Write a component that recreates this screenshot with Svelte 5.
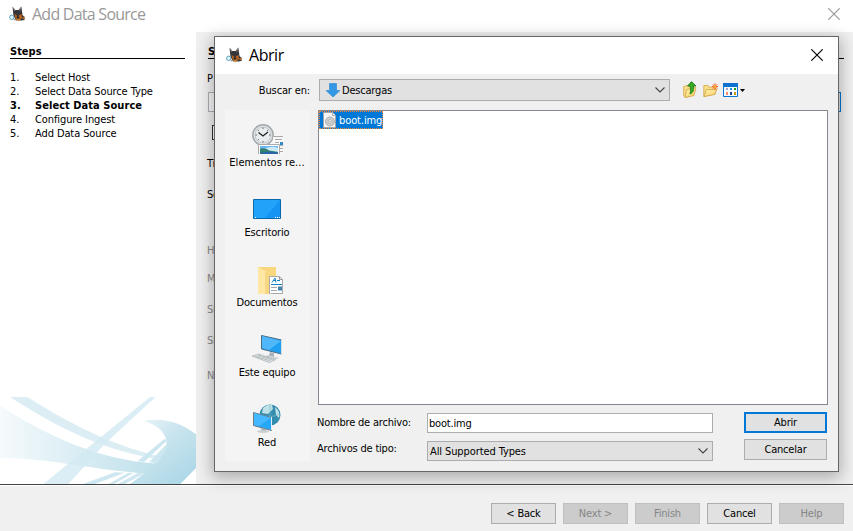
<script>
  const steps = ['Select Host', 'Select Data Source Type', 'Select Data Source', 'Configure Ingest', 'Add Data Source'];
  const places = [
    { id: 'recent', label: 'Elementos re...' },
    { id: 'desktop', label: 'Escritorio' },
    { id: 'docs', label: 'Documentos' },
    { id: 'computer', label: 'Este equipo' },
    { id: 'network', label: 'Red' }
  ];
  const fields = [
    { text: 'Ti', gap: 0 },
    { text: 'Se', gap: 17 },
    { text: 'H', gap: 42, off: true },
    { text: 'M', gap: 14, off: true },
    { text: 'SI', gap: 17, off: true },
    { text: 'SI', gap: 17, off: true },
    { text: 'N', gap: 21, off: true }
  ];
  const actions = [
    { label: '< Back' },
    { label: 'Next >', off: true },
    { label: 'Finish', off: true },
    { label: 'Cancel' },
    { label: 'Help', off: true }
  ];
</script>

{#snippet dog()}
  <svg class="dog" width="16" height="16" viewBox="0 0 16 16">
    <path d="M3.500 0.500L6 4h3.500L12.300 0.500l.7 5L13.500 9l2 2v3l-3 .5H7L4.500 10z" fill="#34363c" />
    <path d="M4.500 2l1.200 3M11.700 2l-1.200 3" stroke="#85797d" />
    <path d="M5.500 8l2 1 1 2 2-2 2-1 .5 4-3.500 2.500-3-2zM12.500 12l3-1.500v3z" fill="#b8641f" />
    <path d="M7.500 10.500h3l-.5 2H8z" fill="#25222a" />
    <path d="M7 14h4.500" stroke="#e39a43" />
    <circle cx="2.800" cy="11.300" r="2.200" fill="#d9f7ff" stroke="#639fb6" />
    <path d="M4.500 13l1.500 1.300" stroke="#777" />
  </svg>
{/snippet}

{#snippet cross()}
  <svg class="cross" width="12" height="12" viewBox="0 0 12 12"><path d="M.3.3l11.4 11.4M11.7.3L.3 11.7" stroke="currentColor" stroke-width="1.15" /></svg>
{/snippet}

{#snippet chevron()}
  <svg class="chevron" width="10" height="6" viewBox="0 0 10 6"><path d="M.5.5L5 5 9.5.5" fill="none" stroke="#444" stroke-width="1.1" /></svg>
{/snippet}

<div class="wizard">
  <header class="title">
    {@render dog()}<span>Add Data Source</span>{@render cross()}
  </header>
  <main>
    <aside>
      <h2>Steps</h2>
      <ol>
        {#each steps as step, i}
          <li class:current={i === 2}><span>{i + 1}.</span><span class="step">{step}</span></li>
        {/each}
      </ol>
      <svg class="swoosh" width="196" height="87" viewBox="0 36 588 261" preserveAspectRatio="none">
        <defs>
          <linearGradient id="wide"><stop offset="0" stop-color="#f5fafc" /><stop offset=".45" stop-color="#dceef4" /><stop offset="1" stop-color="#bfe0eb" /></linearGradient>
          <linearGradient id="ring" x1="0" y1="0" x2=".8" y2="1"><stop offset="0" stop-color="#eef7fa" /><stop offset=".45" stop-color="#c9e4ee" /><stop offset="1" stop-color="#acd8e7" /></linearGradient>
        </defs>
        <path d="M0 62C140 150 290 225 475 236L438 265C270 255 140 215 0 220Z" fill="url(#wide)" />
        <path d="M30 36H82C190 105 330 182 488 216L466 221C290 193 145 110 30 36Z" fill="#dceef4" />
        <path d="M450 36H467L315 176 205 297H130Z" fill="#d3eaf2" opacity=".8" />
        <path d="M430 108C500 95 550 119 588 148V249L541 297H390C430 270 485 224 497 190 509 155 480 120 430 108Z" fill="url(#ring)" />
        <path d="M413 228L494 161 500 168 432 231ZM447 232L500 177 500 188 473 235Z" fill="#cde7f0" />
        <path d="M249 297L345 262 374 263 285 297ZM326 297L385 263 400 264 343 297ZM354 297L413 264 434 265 374 297Z" fill="#cee7f0" />
      </svg>
    </aside>
    <section class="content">
      <h2>S</h2>
      <p class="path">P</p>
      <div class="pathrow"><i class="entry"></i><i class="browse"></i></div>
      <i class="check"></i>
      {#each fields as f}
        <p class:off={f.off} style:margin-top="{f.gap}px">{f.text}</p>
      {/each}
    </section>
  </main>
  <footer>
    {#each actions as a}
      <button disabled={a.off}>{a.label}</button>
    {/each}
  </footer>

  <div class="dialog">
    <header class="title inner">
      {@render dog()}<span>Abrir</span>{@render cross()}
    </header>
    <div class="body">
      <div class="look">
        <label for="folder">Buscar en:</label>
        <div class="combo" id="folder">
          <svg width="14" height="14" viewBox="0 0 14 14"><path d="M3.5.5h7v7H14L7 14 0 7.5h3.5z" fill="#3498e5" stroke="#2384cf" stroke-width=".6" /></svg>
          <span>Descargas</span>{@render chevron()}
        </div>
        <svg class="tools" width="64" height="18" viewBox="0 0 64 18">
          <defs><linearGradient id="fold" x2="1" y2="1"><stop stop-color="#fff4b4" /><stop offset="1" stop-color="#f3cb60" /></linearGradient></defs>
          <path d="M.7 5.500l4-1 1 1h5v8.500l-8 2.500L.7 15z" fill="#f8df8a" stroke="#d0a545" stroke-width=".8" />
          <path d="M3.500 8.500L13 6.500l-2 8-9 2z" fill="url(#fold)" stroke="#d0a545" stroke-width=".8" />
          <path d="M8.500 .6l4.500 4.400h-2.500c0 4 .5 6-3.500 8 1-3 .5-5 0-8H4.500z" fill="#35ab24" stroke="#187813" stroke-width=".8" />
          <path d="M20.800 4.500h4l1 1.500h6.500v7l-11.500 2.500z" fill="#f8df8a" stroke="#d0a545" stroke-width=".8" />
          <path d="M23.500 8.500h10.500l-2.500 5-10.500 2z" fill="url(#fold)" stroke="#d0a545" stroke-width=".8" />
          <path d="M32 2.500v6M29 5.500h6M30 3.500l4 4M34 3.500l-4 4" stroke="#f24716" /><circle cx="32" cy="5.500" r="1.500" fill="#ffad38" />
          <path d="M40.500 2.500h14v13h-14z" fill="#f6faff" stroke="#0874d5" /><path d="M40 2h15v4H40z" fill="#0c71d0" />
          <path d="M43 7h2v2h-2z" fill="#a1a6c9" /><path d="M47 7h2v2h-2z" fill="#168cef" /><path d="M51 7h2v2h-2z" fill="#1d9e22" />
          <path d="M43 11h2v3h-2z" fill="#ff8b6b" /><path d="M47 11h2v3h-2z" fill="#174991" /><path d="M51 11h2v3h-2z" fill="#c89a22" />
          <path d="M57 8h5L59.500 11z" fill="#000" />
        </svg>
      </div>
      <div class="columns">
        <nav>
          {#each places as p}
            <div class="place">
              <svg width="32" height="32" viewBox={p.id === 'recent' || p.id === 'docs' ? '0 -1 32 32' : '0 0 32 32'}>
                {#if p.id === 'recent'}
                  <circle cx="12" cy="12" r="10.200" fill="#dfe3e5" stroke="#a3a9ac" stroke-width="1.500" />
                  <circle cx="12" cy="12" r="7.900" fill="#e9edef" stroke="#c6cacc" />
                  <path d="M12 4.500v1.500M12 18v1.500M4.500 12h1.500M18 12h1.500M6.800 6.800l1 1M17.200 6.800l-1 1M6.800 17.200l1-1" stroke="#666" />
                  <path d="M7.500 9.500l4.500 3.500 5-4" fill="none" stroke="#222" stroke-width="1.300" />
                  <path d="M22 13h10v19H22z" fill="#f8f8f8" />
                  <path d="M22 13.500h10M24 16.500h7M24 19.500h4M29 22.500h3M29 25.500h3M29 28.500h3" stroke="#aaa" /><path d="M29 19h3v3h-3z" fill="#348ac7" />
                  <path d="M7.500 21.500h21V32h-21z" fill="#fff" stroke="#aaa" />
                  <path d="M9 23h18v8H9z" fill="#6bb5f3" /><path d="M13 26q8-4 14-1v4l-8-1z" fill="#cce9f6" /><path d="M9 26q5-2 9 1.500l9 1.500v2H9z" fill="#357f6d" /><path d="M9 30q9-2 18-.5V31H9z" fill="#2b65a8" />
                {:else if p.id === 'desktop'}
                  <path d="M2.500 7.500h27v19h-27z" fill="#1594f3" stroke="#0969ad" /><path d="M3 8h26L14 26H3z" fill="#27a5fb" opacity=".8" /><path d="M4 25.500h1M24 25.500h5" stroke="#fff" stroke-dasharray="1 1" />
                {:else if p.id === 'docs'}
                  <path d="M7 4h18v27H7z" fill="#f9d77e" /><path d="M7 4l9 5v22H7z" fill="#ffe8a4" /><path d="M15 9v22" stroke="#edc667" />
                  <path d="M18.500 13.500h10l3 3V31h-13z" fill="#fff" stroke="#aaa" /><path d="M28.500 13.500v3h3" fill="none" stroke="#999" />
                  <path d="M21 19.500l3-4.500 1 4.500M22 17.500h3M26 17.500h3M20 21.500h11" fill="none" stroke="#1685c8" /><path d="M20 24.500h6M20 27.500h6M20 30.500h11" stroke="#a6a9ac" /><path d="M27 23.500h4v4h-4z" fill="#4284ad" />
                {:else if p.id === 'computer'}
                  <path d="M10.500 3.500l20 4.500v14l-20-5z" fill="#1f9ff1" stroke="#4c6c82" /><path d="M11 4l19 5-12 9-7-2z" fill="#50b8fa" /><path d="M30.500 8v14" stroke="#d4dde2" />
                  <path d="M19 20l4 1v4l-5-1z" fill="#aab2b8" /><path d="M16 23l12 3-4 2-10-3z" fill="#ccd1d4" />
                  <path d="M1 24l7-2 16 6-6 2.500z" fill="#dfe2e4" stroke="#a8afb3" stroke-width=".7" /><path d="M4 24l15 5M7 23l14 5M6 26l4-3M10 27l4-3M14 28l4-3" stroke="#a6acb0" stroke-width=".6" />
                {:else}
                  <circle cx="19" cy="13" r="10.500" fill="#348caf" /><path d="M12 6q4-4 9-3l1 4-5 5-6-1zM24 5q6 5 4 11l-3-3z" fill="#bfe1e7" /><path d="M19 3v20M9 12q10 5 20 0" fill="none" stroke="#75b9cf" stroke-width=".7" />
                  <path d="M2.500 10.500l18 5v13l-18-5z" fill="#26a8f8" stroke="#6e7b83" /><path d="M3 11l17 5-12 8-5-1z" fill="#43b7ff" /><path d="M20.500 15v13" stroke="#e3edf1" /><path d="M10 26l5 1v3h-4z" fill="#a1abb0" /><ellipse cx="12" cy="29.500" rx="6" ry="1.500" fill="#c9ced0" />
                {/if}
              </svg>
              <span class={p.id}>{p.label}</span>
            </div>
          {/each}
        </nav>
        <div class="right">
          <div class="files">
            <div class="file">
              <svg width="13" height="16" viewBox="0 0 13 16"><path d="M.5.5h9l3 3v12H.5z" fill="#f5f5f5" stroke="#a5a5a5" /><path d="M9.500.5v3h3" fill="#fff" stroke="#aaa" /><circle cx="7" cy="9.500" r="4.500" fill="#ccd0d1" stroke="#999" stroke-width=".7" /><circle cx="7" cy="9.500" r="2" fill="#eee" stroke="#999" stroke-width=".6" /><circle cx="7" cy="9.500" r=".8" fill="#aaa" /></svg>
              <span>boot.img</span>
            </div>
          </div>
          <div class="form">
            <div class="labels"><label for="name">Nombre de archivo:</label><label for="type">Archivos de tipo:</label></div>
            <div class="inputs">
              <div class="field" id="name">boot.img</div>
              <div class="combo type" id="type"><span>All Supported Types</span>{@render chevron()}</div>
            </div>
            <div class="buttons"><button class="primary">Abrir</button><button>Cancelar</button></div>
          </div>
        </div>
      </div>
    </div>
  </div>
</div>

<style>
  :global(body) { margin: 0; }
  .wizard, .wizard * { box-sizing: border-box; }
  .wizard { position: relative; width: 853px; height: 531px; overflow: hidden; display: flex; flex-direction: column; background: #f0f0f0; color: #000; font: 11px/14px "DejaVu Sans Condensed", "DejaVu Sans", sans-serif; font-stretch: condensed; letter-spacing: -.2px; white-space: nowrap; }
  svg { display: block; flex: none; }
  h2, p, ol { margin: 0; padding: 0; }
  .title { display: flex; align-items: center; height: 32px; flex: none; padding: 0 13px 5px 9px; background: #fff; color: #999; font: 16px/24px "Open Sans", "Noto Sans", sans-serif; letter-spacing: -.75px; }
  .title span { margin-left: 7px; }
  .cross { margin-left: auto; }
  main { display: flex; height: 452px; flex: none; }
  aside { width: 196px; height: 452px; display: flex; flex-direction: column; background: #fff; }
  h2 { font: inherit; font-weight: bold; line-height: 16px; height: 15px; border-bottom: 1px solid #000; letter-spacing: 0; }
  aside h2 { margin: 12px 11px 0 10px; }
  ol { list-style: none; margin: 12px 0 0 10px; letter-spacing: -.1px; }
  li { display: flex; height: 14px; }
  li span:first-child { width: 25px; }
  .current { font-weight: bold; letter-spacing: .05px; }
  .swoosh { margin-top: auto; }
  .content { flex: 1; padding: 12px 9px 0 11px; overflow: hidden; }
  .content h2 { margin-left: 1px; }
  .path { margin-top: 13px; }
  .pathrow { display: flex; justify-content: space-between; height: 20px; margin: 6px 3px 0 1px; }
  .entry { width: 500px; background: #f6f6f6; border: 1px solid #abadb3; }
  .browse { width: 80px; border: 1px solid #0078d7; background: #e1e1e1; }
  .check { display: block; width: 15px; height: 15px; margin: 13px 0 17px 5px; border: 1px solid #333; background: #fff; }
  .off { color: #888; }
  footer { flex: 1; display: flex; justify-content: flex-end; gap: 7px; padding: 18px 9px 0 0; border-top: 1px solid #444; box-shadow: inset 0 1px #fff; }
  button { width: 65px; height: 21px; padding: 0; border: 1px solid #adadad; background: #e1e1e1; color: #000; font: inherit; letter-spacing: inherit; }
  button:disabled { background: #ccc; border-color: #bfbfbf; color: #858585; }
  .dialog { position: absolute; left: 214px; top: 36px; width: 625px; height: 436px; border: 1px solid #666; background: #f0f0f0; box-shadow: 0 4px 15px 2px rgba(0, 0, 0, .28); }
  .inner { height: 37px; padding: 0 15px 0 11px; color: #000; letter-spacing: -.45px; }
  .inner span { margin-top: -1px; }
  .inner .cross, .inner .dog { margin-top: -1px; }
  .body { padding: 5px 10px 0; }
  .look { display: flex; height: 22px; align-items: center; }
  .look label { width: 86px; margin-right: 8px; padding: 1px 1px 0 0; text-align: right; letter-spacing: -.15px; }
  .combo { width: 351px; height: 22px; display: flex; align-items: center; padding: 0 4px 0 6px; border: 1px solid #adadb0; background: #e1e1e1; }
  .combo span { margin-left: 2px; padding-top: 1px; }
  .chevron { margin-left: auto; }
  .tools { margin-left: 13px; }
  .columns { display: flex; margin-top: 9px; }
  nav { width: 85px; height: 351px; margin-right: 8px; padding-top: 12px; background: #f4f4f4; }
  .place { display: flex; flex-direction: column; align-items: center; height: 70px; width: 84px; }
  .place span { margin-top: 2px; letter-spacing: -.15px; }
  .place .recent { letter-spacing: .05px; }
  .right { width: 510px; }
  .files { height: 295px; border: 1px solid #828790; background: #fff; }
  .file { width: 64px; height: 18px; display: flex; align-items: center; padding-left: 3px; background: #0078d7; color: #fff; border: 1px dotted #ff8728; letter-spacing: -.1px; }
  .file span { margin-left: 3px; padding-top: 1px; }
  .form { display: flex; padding-top: 7px; }
  .labels { width: 109px; display: flex; flex-direction: column; gap: 12px; padding-top: 4px; margin-left: -1px; margin-right: 1px; }
  .inputs { width: 286px; display: flex; flex-direction: column; gap: 8px; padding-top: 1px; }
  .field { height: 20px; padding: 3px 1px; border: 1px solid #abadb3; background: #fff; }
  .type { width: 286px; height: 20px; padding-left: 0; letter-spacing: -.1px; }
  .buttons { margin: 0 1px 0 auto; display: flex; flex-direction: column; gap: 6px; }
  .buttons button { width: 83px; }
  .buttons .primary { border: 2px solid #0078d7; }
</style>
